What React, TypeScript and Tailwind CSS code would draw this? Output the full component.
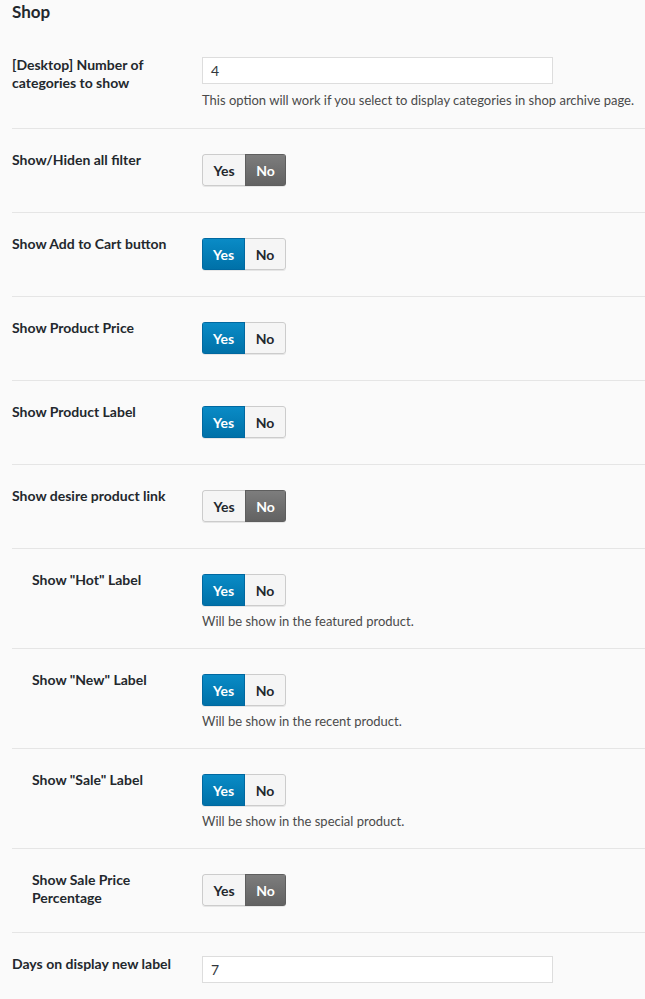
type Row =
  | { kind: "input"; label: string; value: string; note?: string; indent?: boolean }
  | { kind: "toggle"; label: string; on: boolean; note?: string; indent?: boolean };

const rows: Row[] = [
  {
    kind: "input",
    label: "[Desktop] Number of categories to show",
    value: "4",
    note: "This option will work if you select to display categories in shop archive page.",
  },
  { kind: "toggle", label: "Show/Hiden all filter", on: false },
  { kind: "toggle", label: "Show Add to Cart button", on: true },
  { kind: "toggle", label: "Show Product Price", on: true },
  { kind: "toggle", label: "Show Product Label", on: true },
  { kind: "toggle", label: "Show desire product link", on: false },
  { kind: "toggle", label: 'Show "Hot" Label', on: true, note: "Will be show in the featured product.", indent: true },
  { kind: "toggle", label: 'Show "New" Label', on: true, note: "Will be show in the recent product.", indent: true },
  { kind: "toggle", label: 'Show "Sale" Label', on: true, note: "Will be show in the special product.", indent: true },
  { kind: "toggle", label: "Show Sale Price Percentage", on: false, indent: true },
  { kind: "input", label: "Days on display new label", value: "7" },
];

function Toggle({ on }: { on: boolean }) {
  return (
    <div className="flex h-[32px] w-[84px] rounded-[3px] overflow-hidden text-[14px] font-bold shadow-[0_1px_0_rgba(0,0,0,0.08)]">
      <div
        className={
          on
            ? "w-[43px] flex items-center justify-center text-white bg-gradient-to-b from-[#0a8bc6] to-[#0071a8] border border-[#0068a0]"
            : "w-[43px] flex items-center justify-center text-[#23282d] bg-[#f5f5f5] border border-[#cccccc] border-r-0 rounded-l-[3px]"
        }
      >
        Yes
      </div>
      <div
        className={
          on
            ? "flex-1 flex items-center justify-center text-[#23282d] bg-[#f5f5f5] border border-[#cccccc] border-l-0 rounded-r-[3px]"
            : "flex-1 flex items-center justify-center text-white bg-gradient-to-b from-[#7d7d7d] to-[#626262] border border-[#5e5e5e]"
        }
      >
        No
      </div>
    </div>
  );
}

function Field({ row, last }: { row: Row; last: boolean }) {
  return (
    <div className={"flex pt-[22px] " + (last ? "pb-[18px]" : "pb-[20px] border-b border-[#e5e5e5]")}>
      <div
        className={
          "w-[190px] shrink-0 text-[14px] leading-[18px] font-bold text-[#23282d] " +
          (row.indent ? "pl-[20px] pr-[30px]" : "pr-[26px]")
        }
      >
        {row.label}
      </div>
      <div className="flex-1 flex flex-col">
        {row.kind === "input" ? (
          <div className="mt-[1px] w-[351px] h-[27px] bg-white border border-[#dddddd] flex items-center px-[8px] text-[14px] text-[#32373c]">
            {row.value}
          </div>
        ) : (
          <div className="mt-[3px] mb-[6px]">
            <Toggle on={row.on} />
          </div>
        )}
        {row.note && (
          <div className={(row.kind === "input" ? "mt-[8px]" : "mt-[1px] -mb-[1px]") + " text-[13px] leading-[16px] text-[#4a4a4a]"}>
            {row.note}
          </div>
        )}
      </div>
    </div>
  );
}

export default function App() {
  return (
    <div className="min-h-screen bg-[#fafafa] pl-[12px] font-['Lato',sans-serif]">
      <h2 className="pt-[2px] text-[17px] leading-[20px] font-bold text-[#23282d] h-[34px]">Shop</h2>
      {rows.map((r, i) => (
        <Field key={i} row={r} last={i === rows.length - 1} />
      ))}
    </div>
  );
}
